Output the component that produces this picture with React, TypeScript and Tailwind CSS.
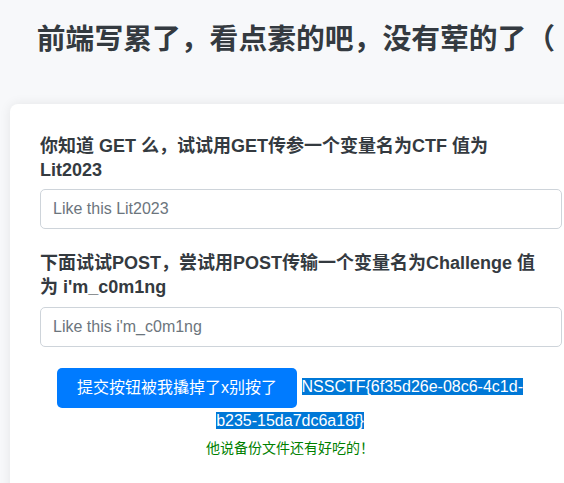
import React from "react";

const font = {
  fontFamily: '"Liberation Sans", Arial, "Noto Sans CJK SC", sans-serif',
};

export default function App() {
  return (
    <div className="w-[564px] h-[483px] overflow-hidden bg-[#f7f8fa]" style={font}>
      <div className="w-[602px] px-[10px]">
        <h1 className="pt-[22px] pr-[10px] text-center text-[28.8px] leading-[35px] font-bold text-[#343a40]">
          前端写累了，看点素的吧，没有荤的了（
        </h1>
        <div className="mt-[47px] rounded-[8px] bg-white p-[30px] shadow-[0_0_12px_rgba(0,0,0,0.08)]">
          <div className="mb-[22px]">
            <label className="block mb-[7px] pr-[22px] text-[18px] leading-[24px] font-bold text-[#343a40]">
              你知道 GET 么，试试用GET传参一个变量名为CTF 值为 Lit2023
            </label>
            <input
              className="block w-full h-[40px] rounded-[5px] border border-[#ced4da] px-[12px] text-[16px] text-[#495057] placeholder:text-[#6c757d] outline-none"
              placeholder="Like this Lit2023"
            />
          </div>
          <div className="mb-[21px]">
            <label className="block mb-[8px] pr-[22px] text-[18px] leading-[24px] font-bold text-[#343a40]">
              下面试试POST，尝试用POST传输一个变量名为Challenge 值为 i'm_c0m1ng
            </label>
            <input
              className="block w-full h-[40px] rounded-[5px] border border-[#ced4da] px-[12px] text-[16px] text-[#495057] placeholder:text-[#6c757d] outline-none"
              placeholder="Like this i'm_c0m1ng"
            />
          </div>
          <div className="pr-[22px] text-center text-[16px] leading-[26px]">
            <button className="inline-block h-[40px] rounded-[5px] bg-[#007bff] px-[20px] text-[16px] text-white align-middle">
              提交按钮被我撬掉了x别按了
            </button>{" "}
            <span className="bg-[#0078d7] text-white">
              NSSCTF{"{"}6f35d26e-08c6-4c1d-b235-15da7dc6a18f{"}"}
            </span>
            <p className="mt-[4px] text-[14px] leading-[20px] text-[#008000]">
              他说备份文件还有好吃的！
            </p>
          </div>
          <div className="h-[40px]" />
        </div>
      </div>
    </div>
  );
}
